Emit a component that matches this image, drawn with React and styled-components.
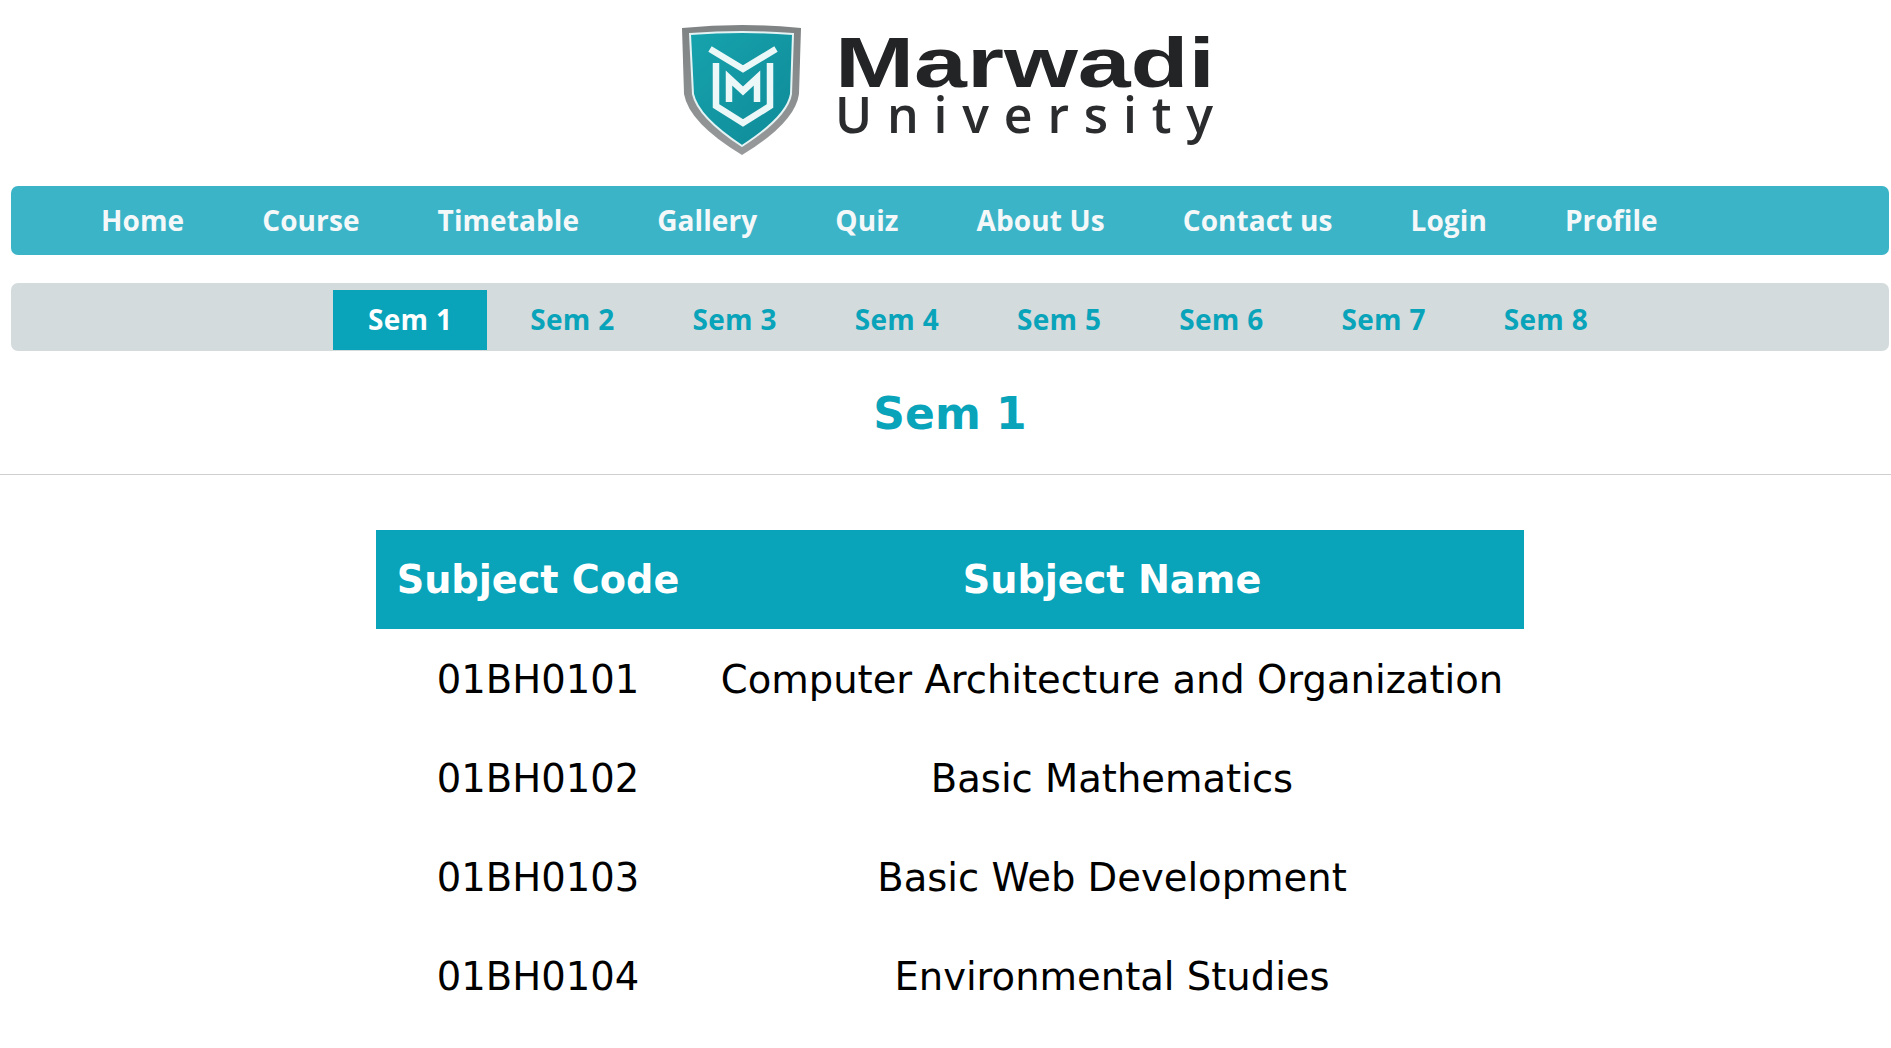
import React from "react"
import styled, { createGlobalStyle } from "styled-components"

const navItems = ["Home", "Course", "Timetable", "Gallery", "Quiz", "About Us", "Contact us", "Login", "Profile"]
const semItems = ["Sem 1", "Sem 2", "Sem 3", "Sem 4", "Sem 5", "Sem 6", "Sem 7", "Sem 8"]
const subjects = [
    { code: "01BH0101", name: "Computer Architecture and Organization" },
    { code: "01BH0102", name: "Basic Mathematics" },
    { code: "01BH0103", name: "Basic Web Development" },
    { code: "01BH0104", name: "Environmental Studies" },
]

function Logo() {
    return (
        <LogoArt width="570" height="160" viewBox="0 0 570 160" role="img" aria-label="Marwadi University">
            <defs>
                <linearGradient id="shieldTeal" x1="0" y1="0" x2="1" y2="1">
                    <stop offset="0" stopColor="#16a3ad" />
                    <stop offset="1" stopColor="#0f8a98" />
                </linearGradient>
                <linearGradient id="shieldGrey" x1="0" y1="0" x2="0" y2="1">
                    <stop offset="0" stopColor="#7f8384" />
                    <stop offset="1" stopColor="#97999a" />
                </linearGradient>
            </defs>
            <g transform="translate(10 8)">
                <path d="M11 10 Q72 4 130 10 L128 76 Q124 105 71 137 Q18 105 13 76 Z" fill="url(#shieldGrey)" />
                <path d="M19 16 Q72 12 122 16 L120 76 Q116 99 71 128 Q27 99 22 76 Z" fill="url(#shieldTeal)" stroke="#e4f3f4" strokeWidth="2" />
                <g fill="none" stroke="#ecf8f8" strokeWidth="6.5">
                    <path d="M39 31 L72 51 L105 31" />
                    <path d="M45 45 V88 L72 105 L99 88 V45" />
                    <path d="M58 84 V60 L72 73 L86 60 V84" />
                </g>
            </g>
            <LogoName x="174" y="77" textLength="380" lengthAdjust="spacingAndGlyphs">Marwadi</LogoName>
            <LogoSub x="174" y="123" textLength="378">University</LogoSub>
        </LogoArt>
    )
}

export default function App() {
    return (
        <Page>
            <GlobalStyle />
            <LogoBar>
                <Logo />
            </LogoBar>
            <NavBar>
                {navItems.map((item) => <NavItem key={item}>{item}</NavItem>)}
            </NavBar>
            <SemBar>
                {semItems.map((item, i) => <SemItem key={item} $active={i === 0}>{item}</SemItem>)}
            </SemBar>
            <Title>Sem 1</Title>
            <Rule />
            <SubjectTable>
                <thead>
                    <tr>
                        <HeadCell $w={324}>Subject Code</HeadCell>
                        <HeadCell $w={824}>Subject Name</HeadCell>
                    </tr>
                </thead>
                <tbody>
                    {subjects.map((s) => (
                        <tr key={s.code}>
                            <BodyCell>{s.code}</BodyCell>
                            <BodyCell>{s.name}</BodyCell>
                        </tr>
                    ))}
                </tbody>
            </SubjectTable>
        </Page>
    )
}

const GlobalStyle = createGlobalStyle`
body {
    margin: 0;
    background: #fff;
    font-family: "DejaVu Sans", Verdana, sans-serif;
}
`

const Page = styled.main`
display: flex;
flex-direction: column;
width: 100%;
min-height: 1048px;
`

const LogoBar = styled.header`
display: flex;
justify-content: center;
height: 186px;
padding-top: 10px;
box-sizing: border-box;
`

const LogoArt = styled.svg`
filter: blur(0.5px);
`

const LogoName = styled.text`
font-family: "Liberation Sans", Arial, sans-serif;
font-weight: 700;
font-size: 71px;
fill: #222426;
`

const LogoSub = styled.text`
font-family: "Open Sans", Arial, sans-serif;
font-weight: 600;
font-size: 50px;
fill: #2a2c2e;
`

const NavBar = styled.nav`
display: flex;
align-items: center;
gap: 78px;
height: 69px;
margin: 0 2px 0 11px;
padding: 0 0 2px 90px;
box-sizing: border-box;
border-radius: 7px;
background-color: #3bb4c8;
`

const NavItem = styled.a`
color: #f5f8f9;
font-family: "Open Sans", sans-serif;
font-size: 28px;
font-weight: 700;
letter-spacing: 0.1px;
`

const SemBar = styled.div`
display: flex;
align-items: stretch;
gap: 8px;
height: 68px;
margin: 28px 2px 0 11px;
padding: 7px 0 1px 322px;
box-sizing: border-box;
border-radius: 7px;
background-color: #d4dbdd;
`

const SemItem = styled.a`
display: flex;
align-items: center;
padding: 0 35px 2px;
color: ${(p) => (p.$active ? "#fff" : "#09a3ba")};
background-color: ${(p) => (p.$active ? "#09a3ba" : "transparent")};
font-family: "Open Sans", sans-serif;
font-size: 28px;
font-weight: 700;
letter-spacing: 0.3px;
`

const Title = styled.h1`
margin: 0 2px 0 11px;
height: 123px;
line-height: 125px;
text-align: center;
color: #09a3ba;
font-size: 44px;
font-weight: 700;
`

const Rule = styled.hr`
width: 100%;
height: 1px;
margin: 0;
border: none;
background-color: #cfcfcf;
`

const SubjectTable = styled.table`
width: 1148px;
margin: 55px 0 0 376px;
border-collapse: collapse;
table-layout: fixed;
`

const HeadCell = styled.th`
width: ${(p) => p.$w}px;
height: 99px;
padding: 0;
background-color: #09a3ba;
color: #fff;
font-size: 38.2px;
font-weight: 700;
text-align: center;
`

const BodyCell = styled.td`
height: 99px;
padding: 2px 0 0;
box-sizing: border-box;
color: #000;
font-size: 38.5px;
text-align: center;
`
